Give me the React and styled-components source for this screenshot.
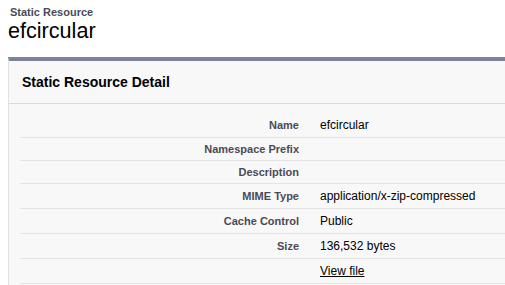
import React from 'react';
import styled, { createGlobalStyle } from 'styled-components';

const GlobalStyle = createGlobalStyle`
  html, body {
    margin: 0;
    padding: 0;
    background: #fff;
    overflow: hidden;
  }
  body {
    font-family: "Liberation Sans", Arial, sans-serif;
    color: #000;
  }
`;

const Page = styled.div`
  padding: 5px 0 0 8px;
`;

const PageHeader = styled.div`
  padding-left: 2px;
  .page-type {
    font-size: 11px;
    line-height: 14px;
    font-weight: bold;
    color: #4a4a56;
  }
  .page-title {
    margin: 0 0 0 -2px;
    font-size: 21.6px;
    font-weight: normal;
    line-height: 24px;
  }
`;

const Panel = styled.section`
  margin-top: 14px;
  background: #f8f8f8;
  border-top: 4px solid #7b8498;
  border-left: 1px solid #e2e2e2;
  padding-bottom: 2px;
`;

const PanelHeader = styled.div`
  height: 42px;
  display: flex;
  align-items: center;
  padding-left: 13px;
  border-bottom: 1px solid #dbdbdb;
  h2 {
    margin: 0;
    font-size: 14px;
    font-weight: bold;
    color: #000;
  }
`;

const Body = styled.div`
  padding: 9px 0 0 11px;
`;

const Row = styled.div`
  display: flex;
  align-items: center;
  border-bottom: 1px solid #e3e3e3;
`;

const Label = styled.div`
  width: 290px;
  flex: none;
  box-sizing: border-box;
  padding: 5px 11px 5px 2px;
  text-align: right;
  font-size: 11px;
  line-height: 12px;
  font-weight: bold;
  color: #4a4a56;
`;

const Value = styled.div`
  padding: 5px 10px;
  font-size: 12px;
  line-height: 14px;
  color: #000;
  a {
    color: #000;
    text-decoration: underline;
  }
`;

const fields = [
  ['Name', 'efcircular'],
  ['Namespace Prefix', ''],
  ['Description', ''],
  ['MIME Type', 'application/x-zip-compressed'],
  ['Cache Control', 'Public'],
  ['Size', '136,532 bytes'],
];

const App = () => {
  return (
    <Page>
      <GlobalStyle />
      <PageHeader>
        <div className="page-type">Static Resource</div>
        <h1 className="page-title">efcircular</h1>
      </PageHeader>
      <Panel>
        <PanelHeader>
          <h2>Static Resource Detail</h2>
        </PanelHeader>
        <Body>
          {fields.map(([label, value]) => (
            <Row key={label}>
              <Label>{label}</Label>
              <Value>{value}</Value>
            </Row>
          ))}
          <Row>
            <Label>&nbsp;</Label>
            <Value>
              <a href="#view">View file</a>
            </Value>
          </Row>
        </Body>
      </Panel>
    </Page>
  );
};

export default App;
